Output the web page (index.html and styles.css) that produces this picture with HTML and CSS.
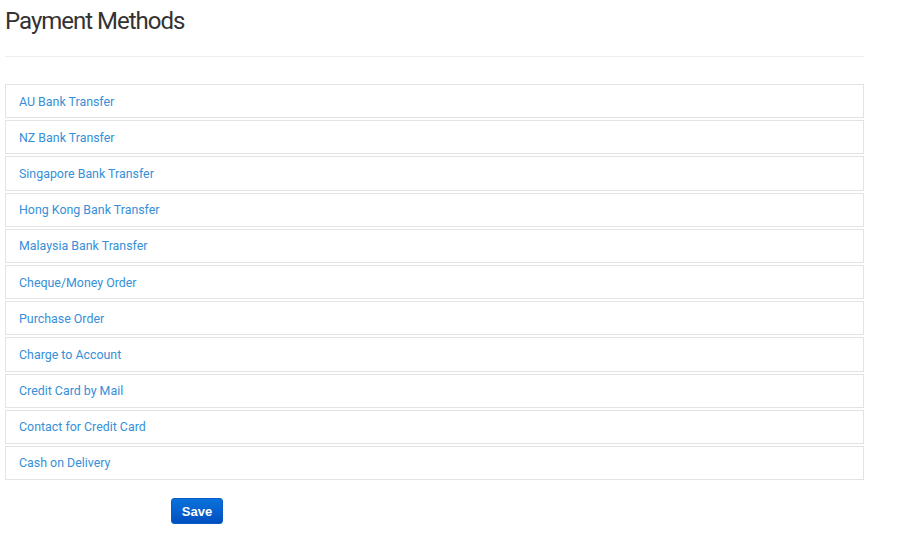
FILE: index.html
```html
<!DOCTYPE html>
<html>
<head>
<meta charset="utf-8">
<link rel="stylesheet" href="styles.css">
</head>
<body>
<div class="page">
  <h1 class="title">Payment Methods</h1>
  <hr class="rule">
  <ul class="methods">
    <li class="method"><a class="method-link" href="#">AU Bank Transfer</a></li>
    <li class="method"><a class="method-link" href="#">NZ Bank Transfer</a></li>
    <li class="method"><a class="method-link" href="#">Singapore Bank Transfer</a></li>
    <li class="method"><a class="method-link" href="#">Hong Kong Bank Transfer</a></li>
    <li class="method"><a class="method-link" href="#">Malaysia Bank Transfer</a></li>
    <li class="method"><a class="method-link" href="#">Cheque/Money Order</a></li>
    <li class="method"><a class="method-link" href="#">Purchase Order</a></li>
    <li class="method"><a class="method-link" href="#">Charge to Account</a></li>
    <li class="method"><a class="method-link" href="#">Credit Card by Mail</a></li>
    <li class="method"><a class="method-link" href="#">Contact for Credit Card</a></li>
    <li class="method"><a class="method-link" href="#">Cash on Delivery</a></li>
  </ul>
  <div class="actions">
    <button class="save" type="button">Save</button>
  </div>
</div>
</body>
</html>
```
FILE: styles.css
```css
html, body {
  margin: 0;
  padding: 0;
  background: #fff;
}
.page {
  width: 859px;
  padding: 0 0 0 5px;
  font-family: Roboto, "Liberation Sans", sans-serif;
}
.title {
  margin: 0;
  padding-top: 7px;
  font-size: 24px;
  line-height: 28px;
  font-weight: 400;
  letter-spacing: -1px;
  color: #333;
}
.rule {
  margin: 21px 0 0 0;
  border: 0;
  border-top: 1px solid #eee;
  height: 0;
}
.methods {
  list-style: none;
  margin: 27px 0 0 0;
  padding: 0;
  display: flex;
  flex-direction: column;
  gap: 2px;
}
.method {
  height: 32.2px;
  border: 1px solid #e3e3e3;
  display: flex;
  align-items: center;
  padding-left: 13px;
}
.method-link {
  font-size: 12.4px;
  color: #3690d8;
  text-decoration: none;
}
.actions {
  padding: 18px 0 0 166px;
}
.save {
  width: 52px;
  height: 26px;
  padding: 0;
  border: 1px solid #0b5bc4;
  border-radius: 3px;
  background: linear-gradient(#0a72dc, #004fbf);
  color: #fff;
  font-family: "Liberation Sans", Arial, sans-serif;
  font-size: 13px;
  font-weight: 700;
}
```
